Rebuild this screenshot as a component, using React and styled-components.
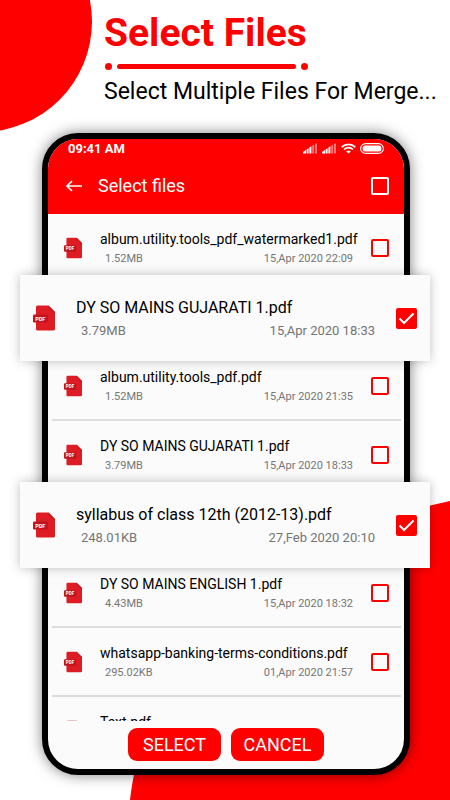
import React, {Component} from 'react';
import styled, {createGlobalStyle} from 'styled-components';

const GlobalStyle = createGlobalStyle`
*{
box-sizing: border-box;
}
body{
margin: 0;
background-color: white;
font-family: Roboto, sans-serif;
}
`

const Page = styled.div`
display: flex;
position: relative;
flex-flow: column;
height: 100vh;
min-height: 560px;
padding: 0 40px 25px 42px;
overflow: hidden;
background-color: white;
`
const TopCircle = styled.div`
position: absolute;
top: -89px;
left: -129px;
height: 221px;
width: 221px;
border-radius: 50%;
background-color: #FF0000;
`
const BottomShape = styled.svg`
position: absolute;
right: 0;
bottom: 0;
height: 300px;
width: 320px;
fill: #FF0000;
`
const Intro = styled.header`
display: flex;
position: relative;
flex-flow: column;
align-items: flex-start;
height: 133px;
padding: 12px 0 0 62px;
margin-right: -40px;
white-space: nowrap;
`
const Title = styled.h1`
margin: 0;
font-size: 39px;
line-height: 42px;
font-weight: 700;
color: #FF0000;
`
const Underline = styled.div`
display: flex;
align-items: center;
gap: 5px;
margin: 9px 0 10px 1px;
`
const Dot = styled.span`
height: 7px;
width: 7px;
border-radius: 50%;
background-color: #FF0000;
`
const Bar = styled.span`
height: 5px;
width: 179px;
border-radius: 3px;
background-color: #FF0000;
`
const Subtitle = styled.p`
margin: 0;
font-size: 23px;
line-height: 24px;
color: black;
`
const Phone = styled.main`
display: flex;
position: relative;
flex-flow: column;
flex: 1;
min-height: 0;
border: solid 6px black;
border-radius: 36px;
background-color: #FBFBFB;
box-shadow: 0 0 14px rgba(0,0,0,0.5);
`
const Top = styled.div`
border-radius: 30px 30px 0 0;
color: white;
background-color: #FF0000;
`
const StatusBar = styled.div`
display: flex;
justify-content: space-between;
align-items: center;
height: 18px;
padding: 0 20px;
font-size: 13px;
font-weight: 700;
`
const StatusIcons = styled.div`
display: flex;
align-items: center;
gap: 4px;
`
const AppBar = styled.div`
display: flex;
align-items: center;
height: 57px;
padding: 0 15px 0 17px;
`
const BackButton = styled.button`
display: flex;
padding: 0;
margin-right: 15px;
border: none;
color: white;
background: none;
cursor: pointer;
`
const AppTitle = styled.h2`
flex: 1;
margin: 0;
font-size: 18px;
line-height: 24px;
font-weight: 400;
`
const List = styled.ul`
flex: 1;
min-height: 0;
padding: 0;
margin: 0;
list-style: none;
overflow-x: visible;
overflow-y: clip;
`
const Row = styled.li`
display: flex;
align-items: center;
gap: 18px;
height: 69px;
padding: 0 12px;
margin: 0 3px 0 4px;
border-bottom: solid 2px #DDDDDD;
`
const RaisedRow = styled.li`
display: flex;
position: relative;
z-index: 1;
align-items: center;
gap: 21px;
height: 86px;
padding: 0 13px;
margin: -8px -26px -9px -28px;
background-color: #FBFBFB;
box-shadow: 0 0 10px rgba(0,0,0,0.25);
`
const Details = styled.div`
flex: 1;
min-width: 0;
padding-top: 2px;
white-space: nowrap;
`
const FileName = styled.label`
display: block;
font-size: ${props => props.$big ? '16px' : '14px'};
line-height: ${props => props.$big ? '24px' : '20px'};
color: black;
`
const Info = styled.div`
display: flex;
justify-content: space-between;
padding-left: 5px;
font-size: ${props => props.$big ? '13px' : '11px'};
line-height: ${props => props.$big ? '22px' : '20px'};
color: #757575;
`
const CheckWrap = styled.span`
display: grid;
place-items: center;
`
const Check = styled.input`
grid-area: 1 / 1;
appearance: none;
height: ${props => props.$big ? '21px' : '18px'};
width: ${props => props.$big ? '21px' : '18px'};
margin: 0;
border: solid 2px ${props => props.$light ? 'white' : '#FF0000'};
border-radius: 2px;
cursor: pointer;
&:checked{
background-color: #FF0000;
}
`
const Tick = styled.svg`
grid-area: 1 / 1;
pointer-events: none;
`
const Footer = styled.div`
display: flex;
justify-content: center;
gap: 10px;
padding: 7px 0 8px;
`
const Button = styled.button`
height: 33px;
width: 93px;
padding: 0;
border: none;
border-radius: 9px;
color: white;
background-color: #FF0000;
font-family: inherit;
font-size: 18px;
cursor: pointer;
`

const Signal = () => (
    <svg width="15" height="11" viewBox="0 0 15 11" fill="white">
        <path d="M0 10.5V9L3 7v3.5zM3.6 10.5V6.6l2-1.4v5.3zM6.4 10.5V4.6l2-1.4v7.3z"/>
        <path opacity="0.45" d="M9.2 10.5V2.7l2-1.3v9.1zM12 10.5V1l2-1v10.5z"/>
    </svg>
)

const Wifi = () => (
    <svg width="15" height="11" viewBox="0 0 15 11" fill="none" stroke="white" strokeWidth="1.7">
        <path d="M0.7 4.1a9.6 9.6 0 0 1 13.6 0"/>
        <path d="M3 6.5a6.4 6.4 0 0 1 9 0"/>
        <path d="M5.2 8.6a3.3 3.3 0 0 1 4.6 0L7.5 10.4z" fill="white" stroke="none"/>
    </svg>
)

const Battery = () => (
    <svg width="24" height="11" viewBox="0 0 24 11">
        <rect x="0.6" y="0.6" width="22.8" height="9.8" rx="4.9" fill="none" stroke="white" strokeWidth="1.1"/>
        <rect x="2.6" y="2.4" width="18.8" height="6.2" rx="2.6" fill="white"/>
    </svg>
)

const PdfIcon = ({big}) => (
    <svg width={big ? 22 : 18} height={big ? 26 : 22} viewBox="0 0 22 26" aria-hidden="true">
        <path d="M4.5 0.5h11L22 7v17a1.5 1.5 0 0 1-1.5 1.5h-16A1.5 1.5 0 0 1 3 24V2a1.5 1.5 0 0 1 1.5-1.5z" fill="#DD1C24"/>
        <path d="M15.5 0.5L22 7v2l-6.5-6z" fill="#C9161F"/>
        <rect x="0" y="9.5" width="15" height="8" rx="1.2" fill="#C3141D"/>
        <text x="7.3" y="15.7" textAnchor="middle" fontFamily="Roboto, sans-serif" fontSize="5.5" fontWeight="700" fill="white">PDF</text>
    </svg>
)

const FILES = [
    {name: 'album.utility.tools_pdf_watermarked1.pdf', size: '1.52MB', date: '15,Apr 2020 22:09'},
    {name: 'DY SO MAINS GUJARATI 1.pdf', size: '3.79MB', date: '15,Apr 2020 18:33', raised: true},
    {name: 'album.utility.tools_pdf.pdf', size: '1.52MB', date: '15,Apr 2020 21:35'},
    {name: 'DY SO MAINS GUJARATI 1.pdf', size: '3.79MB', date: '15,Apr 2020 18:33'},
    {name: 'syllabus of class 12th (2012-13).pdf', size: '248.01KB', date: '27,Feb 2020 20:10', raised: true},
    {name: 'DY SO MAINS ENGLISH 1.pdf', size: '4.43MB', date: '15,Apr 2020 18:32'},
    {name: 'whatsapp-banking-terms-conditions.pdf', size: '295.02KB', date: '01,Apr 2020 21:57'},
    {name: 'Text.pdf'},
]

class App extends Component {
    constructor(props) {
        super(props);
        this.state = {selected: FILES.map(item => !!item.raised)};
        this.toggle = this.toggle.bind(this);
        this.setAll = this.setAll.bind(this);
    }
    toggle(index) {
        this.setState(prev => ({
            selected: prev.selected.map((s, i) => i === index ? !s : s)
        }));
    }
    setAll(value) {
        this.setState({selected: FILES.map(() => value)});
    }

    render() {
        const {selected} = this.state;
        const all = selected.every(s => s);
        return (<Page>
                <GlobalStyle/>
                <TopCircle/>
                <BottomShape viewBox="0 0 320 300" aria-hidden="true">
                    <path d="M320 1C160 34 18 140 0 300H320z"/>
                </BottomShape>
                <Intro>
                    <Title>Select Files</Title>
                    <Underline>
                        <Dot/>
                        <Bar/>
                        <Dot/>
                    </Underline>
                    <Subtitle>Select Multiple Files For Merge...</Subtitle>
                </Intro>
                <Phone>
                    <Top>
                        <StatusBar>
                            <span>09:41 AM</span>
                            <StatusIcons>
                                <Signal/>
                                <Signal/>
                                <Wifi/>
                                <Battery/>
                            </StatusIcons>
                        </StatusBar>
                        <AppBar>
                            <BackButton aria-label="Back">
                                <svg width="18" height="14" viewBox="0 0 18 14" fill="none" stroke="white" strokeWidth="1.7">
                                    <path d="M17 7H2M7 2L2 7l5 5"/>
                                </svg>
                            </BackButton>
                            <AppTitle>Select files</AppTitle>
                            <Check type="checkbox" $light aria-label="Select all" checked={all} onChange={() => this.setAll(!all)}/>
                        </AppBar>
                    </Top>
                    <List>
                        {FILES.map((item, index) => {
                            const Item = item.raised ? RaisedRow : Row;
                            return (
                                <Item key={index}>
                                    <PdfIcon big={item.raised}/>
                                    <Details>
                                        <FileName $big={item.raised} htmlFor={'file' + index}>{item.name}</FileName>
                                        <Info $big={item.raised}>
                                            <span>{item.size || '\u00a0'}</span>
                                            <span>{item.date}</span>
                                        </Info>
                                    </Details>
                                    <CheckWrap>
                                        <Check type="checkbox" id={'file' + index} $big={item.raised} checked={selected[index]} onChange={() => this.toggle(index)}/>
                                        {selected[index] &&
                                        <Tick width="17" height="17" viewBox="0 0 17 17" fill="none" stroke="white" strokeWidth="2">
                                            <path d="M1.5 8.5l4.5 4.5L15.5 3.5"/>
                                        </Tick>}
                                    </CheckWrap>
                                </Item>
                            )
                        })}
                    </List>
                    <Footer>
                        <Button>SELECT</Button>
                        <Button onClick={() => this.setAll(false)}>CANCEL</Button>
                    </Footer>
                </Phone>
            </Page>
        );
    }
}

export default App;
